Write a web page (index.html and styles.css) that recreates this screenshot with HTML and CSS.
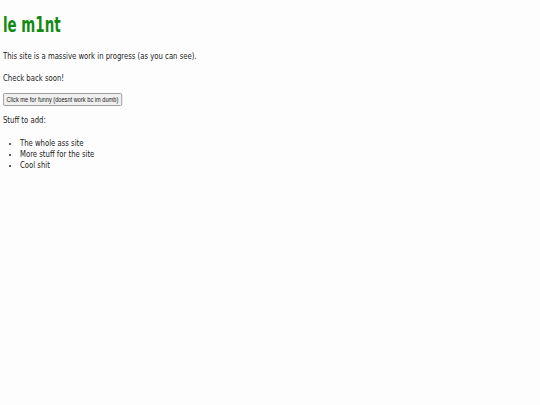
FILE: index.html
```html
<!DOCTYPE html>
<html>
<head>
<meta charset="utf-8">
<link rel="stylesheet" href="styles.css">
</head>
<body>
<h1 class="title">le m1nt</h1>
<p class="text">This site is a massive work in progress (as you can see).</p>
<p class="text">Check back soon!</p>
<button class="btn">Click me for funny (doesnt work bc im dumb)</button>
<p class="text stuff">Stuff to add:</p>
<ul class="list">
<li><span class="item">The whole ass site</span></li>
<li><span class="item">More stuff for the site</span></li>
<li><span class="item">Cool shit</span></li>
</ul>
</body>
</html>
```
FILE: styles.css
```css
html { background: #fdfdfd; }
body {
  margin: 0;
  padding: 3px 3px;
  font-family: "DejaVu Sans Condensed", "DejaVu Sans", sans-serif;
  font-size: 9px;
  line-height: 11px;
  color: #222;
}
.title {
  color: #128a12;
  font-size: 21px;
  line-height: 24px;
  margin: 10px 0 14px;
  font-weight: bold;
  transform: scaleX(0.71);
  transform-origin: 0 0;
}
.text {
  margin: 0 0 11px;
  transform: scaleX(0.85);
  transform-origin: 0 0;
}
.stuff { margin-bottom: 12px; }
.btn {
  display: block;
  font-family: "Liberation Sans", Arial, sans-serif;
  font-size: 6.5px;
  padding: 2px 3px;
  margin: -2px 0 9px;
  background: #f0f0f0;
  border: 1px solid #999;
  border-radius: 2px;
  color: #222;
  transform: scaleX(0.87);
  transform-origin: 0 0;
}
.list { margin: 0; padding-left: 17px; }
.list li {
  line-height: 11px;
  font-size: 8px;
}
.item {
  display: inline-block;
  font-size: 9px;
  transform: scaleX(0.85);
  transform-origin: 0 0;
}
```
